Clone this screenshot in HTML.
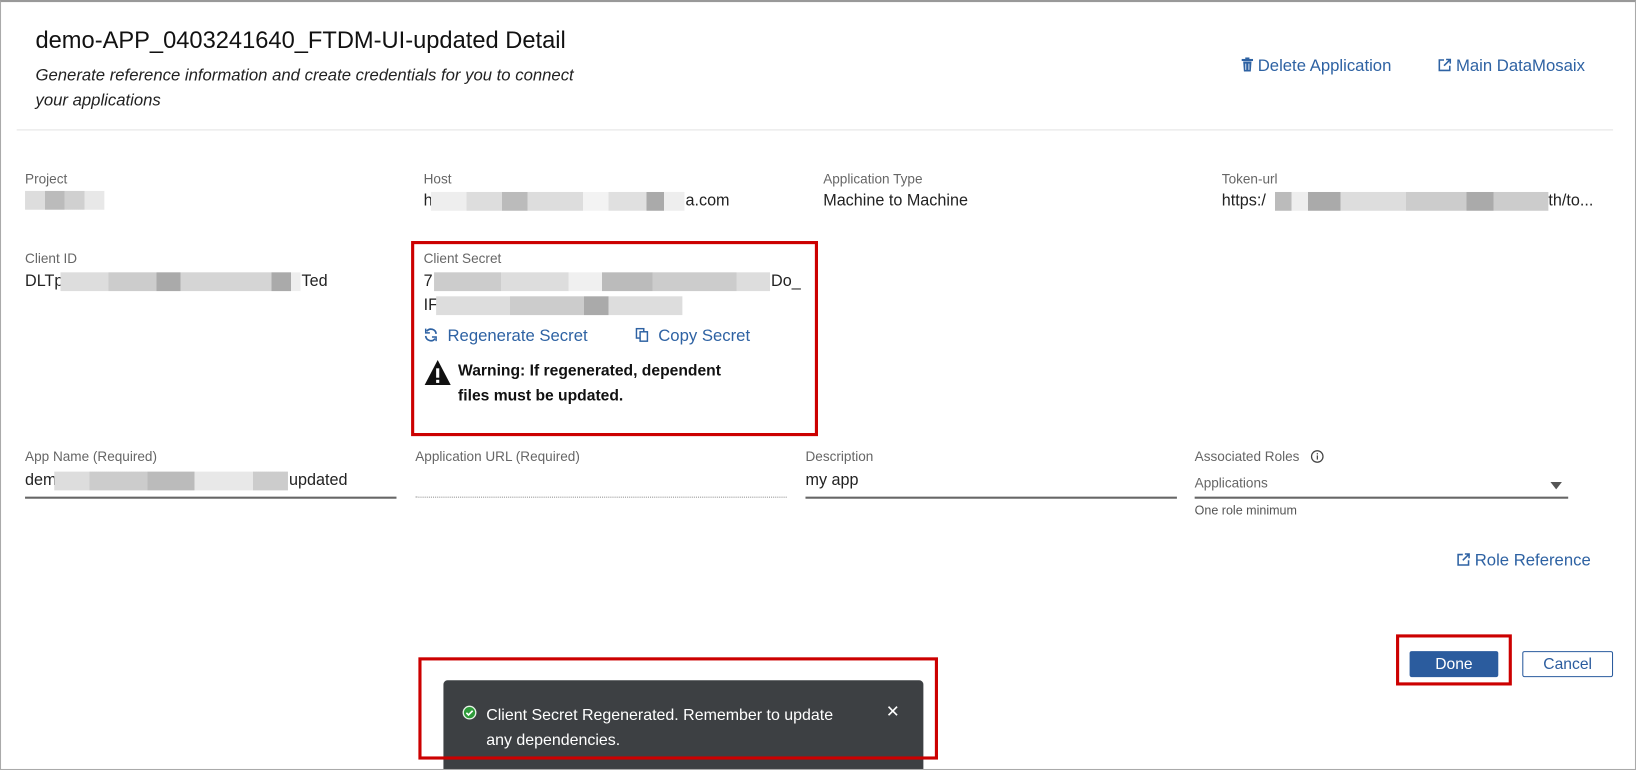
<!DOCTYPE html>
<html><head><meta charset="utf-8"><style>
*{box-sizing:border-box;margin:0;padding:0}
html,body{width:1636px;height:770px;overflow:hidden;background:#fff;font-family:"Liberation Sans",sans-serif}
#s{position:absolute;left:0;top:0;width:1568px;height:738px;transform:scale(1.04337);transform-origin:0 0;overflow:hidden}
.a{position:absolute;white-space:nowrap}
.lbl{font-size:13px;color:#666}
.val{font-size:15.5px;color:#222}
.lnk{color:#2e62a3;font-size:16px}
.blk{position:absolute;height:18px}
.ul{position:absolute;height:2px;background:#666}
</style></head><body><div id="s">
<div class="a" style="left:425px;top:652px;width:460px;height:100px;background:#3d4043;border-radius:4px"></div>
<div class="a" style="left:0;top:0;width:1568px;height:738px;border:1px solid #aaa;border-top:2px solid #999"></div>
<div class="a" style="left:34px;top:25px;font-size:22.7px;color:#111;font-weight:500">demo-APP_0403241640_FTDM-UI-updated Detail</div>
<div class="a" style="left:34px;top:61px;font-size:16px;font-style:italic;color:#222;line-height:24px">Generate reference information and create credentials for you to connect<br>your applications</div>
<div class="a lnk" style="left:1190px;top:55px"><svg width="11" height="14" viewBox="0 0 11 14" style="vertical-align:-1px"><rect x="0" y="1.5" width="11" height="2" fill="#2e62a3"/><rect x="3.5" y="0" width="4" height="2" fill="#2e62a3"/><path d="M1.5 4h8l-.7 9.5h-6.6z" fill="#2e62a3"/><path d="M4 6v6M7 6v6" stroke="#fff" stroke-width=".8"/></svg> Delete Application</div>
<div class="a lnk" style="left:1378px;top:55px"><svg width="13" height="13" viewBox="0 0 13 13" style="vertical-align:-1px"><path d="M6 1.5H1.5v10h10V7M8 1h4v4M12 1L6 7" fill="none" stroke="#2e62a3" stroke-width="1.5"/></svg> Main DataMosaix</div>
<div class="a" style="left:16px;top:124px;width:1530px;height:1px;background:#e3e3e3"></div>

<div class="a lbl" style="left:24px;top:164px">Project</div>
<div class="blk" style="left:24px;top:183px;width:76px;background:linear-gradient(90deg,#ddd 0 25%,#bbb 25% 50%,#d0d0d0 50% 75%,#e8e8e8 75%)"></div>
<div class="a lbl" style="left:406px;top:164px">Host</div>
<div class="a val" style="left:406px;top:184px">h</div>
<div class="blk" style="left:413px;top:184px;width:243px;background:linear-gradient(90deg,#eee 0 14%,#ddd 14% 28%,#bbb 28% 38%,#ddd 38% 60%,#f3f3f3 60% 70%,#e0e0e0 70% 85%,#aaa 85% 92%,#eee 92%)"></div>
<div class="a val" style="left:657px;top:184px">a.com</div>
<div class="a lbl" style="left:789px;top:164px">Application Type</div>
<div class="a val" style="left:789px;top:184px">Machine to Machine</div>
<div class="a lbl" style="left:1171px;top:164px">Token-url</div>
<div class="a val" style="left:1171px;top:184px">https:/</div>
<div class="blk" style="left:1222px;top:184px;width:262px;background:linear-gradient(90deg,#bbb 0 6%,#eee 6% 12%,#aaa 12% 24%,#ddd 24% 48%,#ccc 48% 70%,#aaa 70% 80%,#ccc 80%)"></div>
<div class="a val" style="left:1484px;top:184px">th/to...</div>

<div class="a lbl" style="left:24px;top:240px">Client ID</div>
<div class="a val" style="left:24px;top:261px">DLTp</div>
<div class="blk" style="left:58px;top:261px;width:230px;background:linear-gradient(90deg,#ddd 0 20%,#ccc 20% 40%,#aaa 40% 50%,#d5d5d5 50% 88%,#aaa 88% 96%,#eee 96%)"></div>
<div class="a val" style="left:289px;top:261px">Ted</div>

<div class="a" style="left:394px;top:231px;width:390px;height:187px;border:3px solid #cc0000"></div>
<div class="a lbl" style="left:406px;top:240px">Client Secret</div>
<div class="a val" style="left:406px;top:261px">7</div>
<div class="blk" style="left:416px;top:261px;width:322px;background:linear-gradient(90deg,#ccc 0 20%,#ddd 20% 40%,#f0f0f0 40% 50%,#bbb 50% 65%,#ccc 65% 90%,#ddd 90%)"></div>
<div class="a val" style="left:739px;top:261px">Do_</div>
<div class="a val" style="left:406px;top:284px">IF</div>
<div class="blk" style="left:418px;top:284px;width:236px;background:linear-gradient(90deg,#ddd 0 30%,#ccc 30% 60%,#aaa 60% 70%,#ddd 70%)"></div>
<div class="a lnk" style="left:406px;top:314px"><svg width="14" height="14" viewBox="0 0 14 14" style="vertical-align:-1px"><path d="M12 6A5 5 0 0 0 3 3.5M2 8a5 5 0 0 0 9 2.5" fill="none" stroke="#2e62a3" stroke-width="1.6"/><path d="M2 1v4h4M12 13V9H8" fill="none" stroke="#2e62a3" stroke-width="1.4"/></svg>&nbsp;&nbsp;Regenerate Secret</div>
<div class="a lnk" style="left:609px;top:314px"><svg width="13" height="14" viewBox="0 0 13 14" style="vertical-align:-1px"><rect x="1" y="1" width="7" height="9" fill="none" stroke="#2e62a3" stroke-width="1.4"/><rect x="4.5" y="4" width="7" height="9" fill="#fff" stroke="#2e62a3" stroke-width="1.4"/></svg>&nbsp;&nbsp;Copy Secret</div>
<svg class="a" style="left:406px;top:344px" width="27" height="26" viewBox="0 0 27 26"><path d="M13.5 1L26 25H1z" fill="#111"/><rect x="12" y="9" width="3" height="9" fill="#fff"/><rect x="12" y="20" width="3" height="3" fill="#fff"/></svg>
<div class="a" style="left:439px;top:344px;font-size:15px;font-weight:bold;color:#111;line-height:24px">Warning: If regenerated, dependent<br>files must be updated.</div>

<div class="a lbl" style="left:24px;top:430px">App Name (Required)</div>
<div class="a val" style="left:24px;top:452px">dem</div>
<div class="blk" style="left:52px;top:452px;width:224px;background:linear-gradient(90deg,#ddd 0 15%,#ccc 15% 40%,#bbb 40% 60%,#e8e8e8 60% 85%,#ccc 85%)"></div>
<div class="a val" style="left:277px;top:452px">updated</div>
<div class="ul" style="left:24px;top:476px;width:356px"></div>
<div class="a lbl" style="left:398px;top:430px">Application URL (Required)</div>
<div class="a" style="left:398px;top:476px;width:356px;border-top:1px dotted #999"></div>
<div class="a lbl" style="left:772px;top:430px">Description</div>
<div class="a val" style="left:772px;top:452px">my app</div>
<div class="ul" style="left:772px;top:476px;width:356px"></div>
<div class="a lbl" style="left:1145px;top:430px">Associated Roles&nbsp;&nbsp;&nbsp;<svg width="13" height="13" viewBox="0 0 13 13" style="vertical-align:-2px"><circle cx="6.5" cy="6.5" r="5.5" fill="none" stroke="#444" stroke-width="1.2"/><rect x="6" y="5.5" width="1.2" height="4" fill="#444"/><rect x="6" y="3.3" width="1.2" height="1.2" fill="#444"/></svg></div>
<div class="a lbl" style="left:1145px;top:455px">Applications</div>
<svg class="a" style="left:1486px;top:462px" width="11" height="7"><path d="M0 0h11L5.5 7z" fill="#555"/></svg>
<div class="ul" style="left:1145px;top:476px;width:358px"></div>
<div class="a" style="left:1145px;top:482px;font-size:12px;color:#555">One role minimum</div>
<div class="a lnk" style="left:1396px;top:529px"><svg width="13" height="13" viewBox="0 0 13 13" style="vertical-align:-1px"><path d="M6 1.5H1.5v10h10V7M8 1h4v4M12 1L6 7" fill="none" stroke="#2e62a3" stroke-width="1.5"/></svg> Role Reference</div>

<div class="a" style="left:1338px;top:608px;width:111px;height:49px;border:3px solid #cc0000"></div>
<div class="a" style="left:1351px;top:624px;width:85px;height:25px;background:#2b5c9e;border-radius:2px;color:#fff;font-size:15px;text-align:center;line-height:25px">Done</div>
<div class="a" style="left:1459px;top:624px;width:87px;height:25px;border:1px solid #2b5c9e;border-radius:2px;color:#2b5c9e;font-size:15px;text-align:center;line-height:23px">Cancel</div>

<div class="a" style="left:401px;top:630px;width:498px;height:98px;border:3px solid #cc0000"></div>
<svg class="a" style="left:443px;top:676px" width="14" height="14" viewBox="0 0 14 14"><circle cx="7" cy="7" r="6" fill="#2e9b3a" stroke="#e8f4e8" stroke-width="1.3"/><path d="M4 7.2l2 2 4-4" fill="none" stroke="#fff" stroke-width="1.6"/></svg>
<div class="a" style="left:466px;top:674px;font-size:15.3px;color:#fff;line-height:24px">Client Secret Regenerated. Remember to update<br>any dependencies.</div>
<div class="a" style="left:849px;top:672px;font-size:16px;color:#fff">✕</div>
</div></body></html>
